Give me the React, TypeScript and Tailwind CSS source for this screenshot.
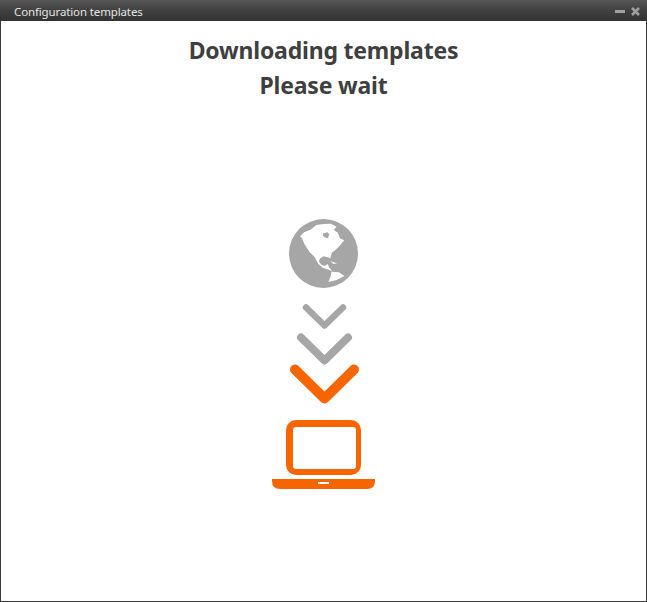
import React from 'react';

const GRAY = '#a6a6a6';
const ORANGE = '#f76500';

function Globe() {
  return (
    <svg width="69" height="69" viewBox="27 27 205 205">
      <circle cx="129.5" cy="129.5" r="102.5" fill={GRAY} />
      <path
        fill="#fff"
        d="M60 78 L72 66 L92 58 L108 45 L130 42 L152 41 L168 50 L160 60 L172 68 L178 84 L191 90 L178 106 L166 118 L154 127 L150 144 L142 141 L130 138 L119 144 L116 153 L123 163 L134 167 L142 161 L146 171 L156 182 L143 177 L127 172 L114 160 L103 140 L88 125 L72 100 L66 84 Z"
      />
      <path fill={GRAY} d="M128 70 L142 66 L146 72 L143 84 L134 82 L128 76 Z" />
      <path fill="#fff" d="M153 184 L175 185 L192 196 L168 208 L144 214 L151 197 Z" />
      <path fill="#fff" d="M150 152 L162 156 L170 160 L158 160 Z" />
    </svg>
  );
}

function Chevrons() {
  return (
    <svg width="70" height="101" viewBox="289 304 70 101" fill="none" strokeLinecap="round" strokeLinejoin="round">
      <path d="M306 307.5 L324.5 325.5 L343 307.5" stroke={GRAY} strokeWidth="6.5" />
      <path d="M301 337.5 L324.5 360.5 L348 337.5" stroke={GRAY} strokeWidth="8" />
      <path d="M295 369.5 L324.5 398.5 L354 369.5" stroke={ORANGE} strokeWidth="10" />
    </svg>
  );
}

function Laptop() {
  return (
    <svg width="103" height="69" viewBox="272 420 103 69">
      <rect x="286" y="420" width="75" height="55" rx="10" fill={ORANGE} />
      <rect x="293" y="427" width="63" height="42" rx="3" fill="#fff" />
      <path d="M272 479 H375 V481 Q375 489 367 489 H280 Q272 489 272 481 Z" fill={ORANGE} />
      <rect x="318" y="482" width="11" height="2" fill="#fff" />
    </svg>
  );
}

export default function App() {
  return (
    <div className="w-[647px] h-[602px] flex flex-col bg-white border border-[#3a3a3a] border-t-0 font-['Noto_Sans','Open_Sans',sans-serif]">
      {/* Title bar */}
      <div className="h-[21px] -mx-px flex items-center justify-between pl-[14px] pr-[7px] pt-[3px] bg-gradient-to-b from-[#565656] via-[#404040] to-[#333333]">
        <span className="text-[11.5px] tracking-[-0.13px] text-[#e4e4e4]">Configuration templates</span>
        <div className="flex items-center gap-[6px] -mt-[2px]">
          <svg width="10" height="9" viewBox="0 0 10 9">
            <rect x="0" y="3" width="10" height="3" fill="#a0a0a0" />
          </svg>
          <svg width="9" height="9" viewBox="0 0 9 9">
            <path d="M1 1 L8 8 M8 1 L1 8" stroke="#a0a0a0" strokeWidth="2.6" />
          </svg>
        </div>
      </div>

      {/* Body */}
      <div className="flex-1 flex flex-col items-center pt-[12px]">
        <h1 className="text-[23px] tracking-[-0.2px] leading-[35px] font-bold text-[#3f3f3f]">Downloading templates</h1>
        <h2 className="text-[23px] tracking-[-0.2px] leading-[35px] font-bold text-[#3f3f3f]">Please wait</h2>
        <div className="mt-[116px] flex flex-col items-center">
          <Globe />
          <div className="mt-[16px]"><Chevrons /></div>
          <div className="mt-[15px]"><Laptop /></div>
        </div>
      </div>
    </div>
  );
}
